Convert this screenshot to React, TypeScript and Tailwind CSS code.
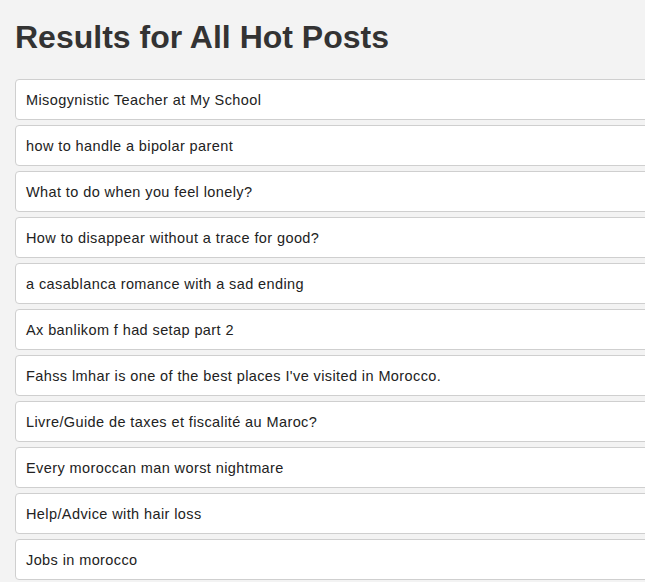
const posts = [
  "Misogynistic Teacher at My School",
  "how to handle a bipolar parent",
  "What to do when you feel lonely?",
  "How to disappear without a trace for good?",
  "a casablanca romance with a sad ending",
  "Ax banlikom f had setap part 2",
  "Fahss lmhar is one of the best places I've visited in Morocco.",
  "Livre/Guide de taxes et fiscalité au Maroc?",
  "Every moroccan man worst nightmare",
  "Help/Advice with hair loss",
  "Jobs in morocco",
];

export default function App() {
  return (
    <div className="min-h-screen overflow-hidden bg-[#f3f3f3] px-[15px] font-['Liberation_Sans',Arial,sans-serif] text-[#333]">
      <h1 className="pt-[19px] pb-[24px] text-[32px] font-bold leading-[36px]">
        Results for All Hot Posts
      </h1>
      <div className="flex w-[720px] flex-col gap-[5px]">
        {posts.map((post) => (
          <div
            key={post}
            className="rounded-[4px] border border-[#cfcfcf] bg-white px-[10px] pt-[11px] pb-[9px] text-[14.5px] leading-[19px] tracking-[0.4px] text-[#222]"
          >
            {post}
          </div>
        ))}
      </div>
    </div>
  );
}
